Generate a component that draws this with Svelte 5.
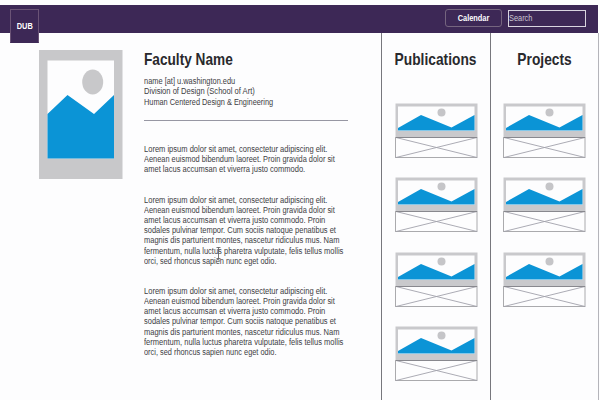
<script>
  const publications = [1, 2, 3, 4];
  const projects = [1, 2, 3];
  // Each line carries its own horizontal condensing factor.
  const intro = [
    ['Lorem ipsum dolor sit amet, consectetur adipiscing elit.', 0.82],
    ['Aenean euismod bibendum laoreet. Proin gravida dolor sit', 0.807],
    ['amet lacus accumsan et viverra justo commodo.', 0.82]
  ];
  const long = [
    ['Lorem ipsum dolor sit amet, consectetur adipiscing elit.', 0.82],
    ['Aenean euismod bibendum laoreet. Proin gravida dolor sit', 0.807],
    ['amet lacus accumsan et viverra justo commodo. Proin', 0.822],
    ['sodales pulvinar tempor. Cum sociis natoque penatibus et', 0.815],
    ['magnis dis parturient montes, nascetur ridiculus mus. Nam', 0.818],
    ['fermentum, nulla luctus pharetra vulputate, felis tellus mollis', 0.82],
    ['orci, sed rhoncus sapien nunc eget odio.', 0.803]
  ];
  const contact = [
    ['name [at] u.washington.edu', 0.808],
    ['Division of Design (School of Art)', 0.825],
    ['Human Centered Design & Engineering', 0.8]
  ];
</script>

{#snippet textLines(lines)}
  {#each lines as [text, sx]}<span class="line" style="transform: scaleX({sx})">{text}</span>{/each}
{/snippet}

{#snippet card()}
  <li class="card">
    <svg width="83" height="56" viewBox="0 0 83 56">
      <rect x="0.5" y="0.5" width="82" height="34" fill="#c9c9cc" />
      <rect x="3" y="3.5" width="76.5" height="24.5" fill="#fdfdfe" />
      <path d="M3 25 L26 12 L56.5 24.5 L79.5 12 V27.5 H3 Z" fill="#0b94d6" />
      <circle cx="46.5" cy="9.5" r="4" fill="#c5c5c8" />
      <rect x="0.5" y="34.5" width="81.5" height="20" fill="none" stroke="#aaaaad" />
      <path d="M1 34.5 L82 54.5 M1 54.5 L82 34.5" stroke="#a2a2ac" stroke-width="0.9" />
      <path d="M1 34.5 H82" stroke="#88888e" />
    </svg>
  </li>
{/snippet}

<div class="page">
  <header>
    <div class="logo"><span>DUB</span></div>
    <nav>
      <button class="calendar"><span>Calendar</span></button>
      <div class="search"><span>Search</span></div>
    </nav>
  </header>
  <div class="body">
    <div class="portrait">
      <svg width="84" height="129" viewBox="0 0 84 129">
        <rect width="83.5" height="129" fill="#c8c8ca" />
        <rect x="8.5" y="10.5" width="66.5" height="98" fill="#fdfdfe" />
        <path d="M8.5 64 L28.5 45 L55 64 L75 45 V108.5 H8.5 Z" fill="#0b94d6" />
        <ellipse cx="53.7" cy="32" rx="10.5" ry="12.5" fill="#c8c8ca" />
      </svg>
    </div>
    <main>
      <h1>Faculty Name</h1>
      <div class="contact">{@render textLines(contact)}</div>
      <hr />
      <div class="bio">
        <p>{@render textLines(intro)}</p>
        <p>{@render textLines(long)}</p>
        <p>{@render textLines(long)}</p>
      </div>
      <svg class="cursor" width="5" height="12" viewBox="0 0 5 12">
        <path d="M0.5 0.5 H4.5 M2.5 0.5 V11.5 M0.5 11.5 H4.5" stroke="#555" stroke-width="0.8" />
      </svg>
    </main>
    <section class="pubs">
      <h2>Publications</h2>
      <ul>{#each publications as p (p)}{@render card()}{/each}</ul>
    </section>
    <section class="projects">
      <h2>Projects</h2>
      <ul>{#each projects as p (p)}{@render card()}{/each}</ul>
    </section>
  </div>
</div>

<style>
  :global(body) { margin: 0; background: #fdfdfe; }
  .page {
    width: 600px; height: 400px; box-sizing: border-box; padding-top: 5px;
    overflow: hidden; display: flex; flex-direction: column;
    background: #fdfdfe; color: #3c3c42;
    font-family: "Liberation Sans", Arial, sans-serif;
  }
  header {
    flex: none; width: 598px; height: 27.5px; background: #3d2856;
    display: flex; justify-content: space-between; align-items: flex-start;
  }
  .logo {
    position: relative; z-index: 1; box-sizing: border-box;
    width: 29px; height: 34px; margin: 4px 0 0 10px;
    background: #3d2856; border: 1px solid #6a5376; border-bottom-color: #3d2856;
    display: flex; align-items: center; justify-content: center;
    color: #fff; font-size: 9px; font-weight: bold;
  }
  .logo span, .calendar span { display: block; transform: scaleX(0.82); }
  nav { display: flex; gap: 6px; margin: 4px 12px 0 0; }
  .calendar {
    box-sizing: border-box; width: 57px; height: 18px; padding: 0;
    background: transparent; border: 1px solid #75657f; border-radius: 3px;
    color: #fff; font: bold 9px "Liberation Sans", Arial, sans-serif;
  }
  .search {
    box-sizing: border-box; width: 78px; height: 17px; margin-top: 1px;
    border: 1.5px solid #d9d5df; color: #ccc7d3;
    font-size: 9px; line-height: 15px;
  }
  .search span { display: block; transform: scaleX(0.82); transform-origin: left; }
  .body { flex: 1; display: flex; min-height: 0; }
  .portrait { width: 84px; padding: 17.5px 21px 0 39px; }
  svg { display: block; }
  main { position: relative; width: 237px; }
  h1, h2 { margin: 0; font-size: 17px; line-height: 20px; white-space: nowrap; color: #29292d; }
  h1 { margin-top: 17px; transform: scaleX(0.803); transform-origin: left; }
  .line {
    display: block; font-size: 9.2px; line-height: 10.2px; height: 10.2px;
    white-space: nowrap; transform-origin: left;
  }
  .contact { margin-top: 6.8px; }
  hr { width: 204px; height: 0; margin: 13px 0 0; border: 0; border-top: 1px solid #9797a3; }
  .bio { margin-top: 23.2px; display: flex; flex-direction: column; gap: 20px; }
  p { margin: 0; }
  .cursor { position: absolute; left: 72px; top: 214px; }
  section { box-sizing: border-box; display: flex; flex-direction: column; align-items: center; }
  .pubs { width: 109px; border-left: 1.5px solid #77777d; }
  .projects { width: 109px; border-left: 1px solid #77777d; border-right: 1px solid #b4b4ba; }
  h2 { margin-top: 17px; transform: scaleX(0.81); }
  ul { list-style: none; margin: 33.5px 0 0; padding: 0; display: flex; flex-direction: column; gap: 18.4px; }
  .card { height: 56px; }
</style>
